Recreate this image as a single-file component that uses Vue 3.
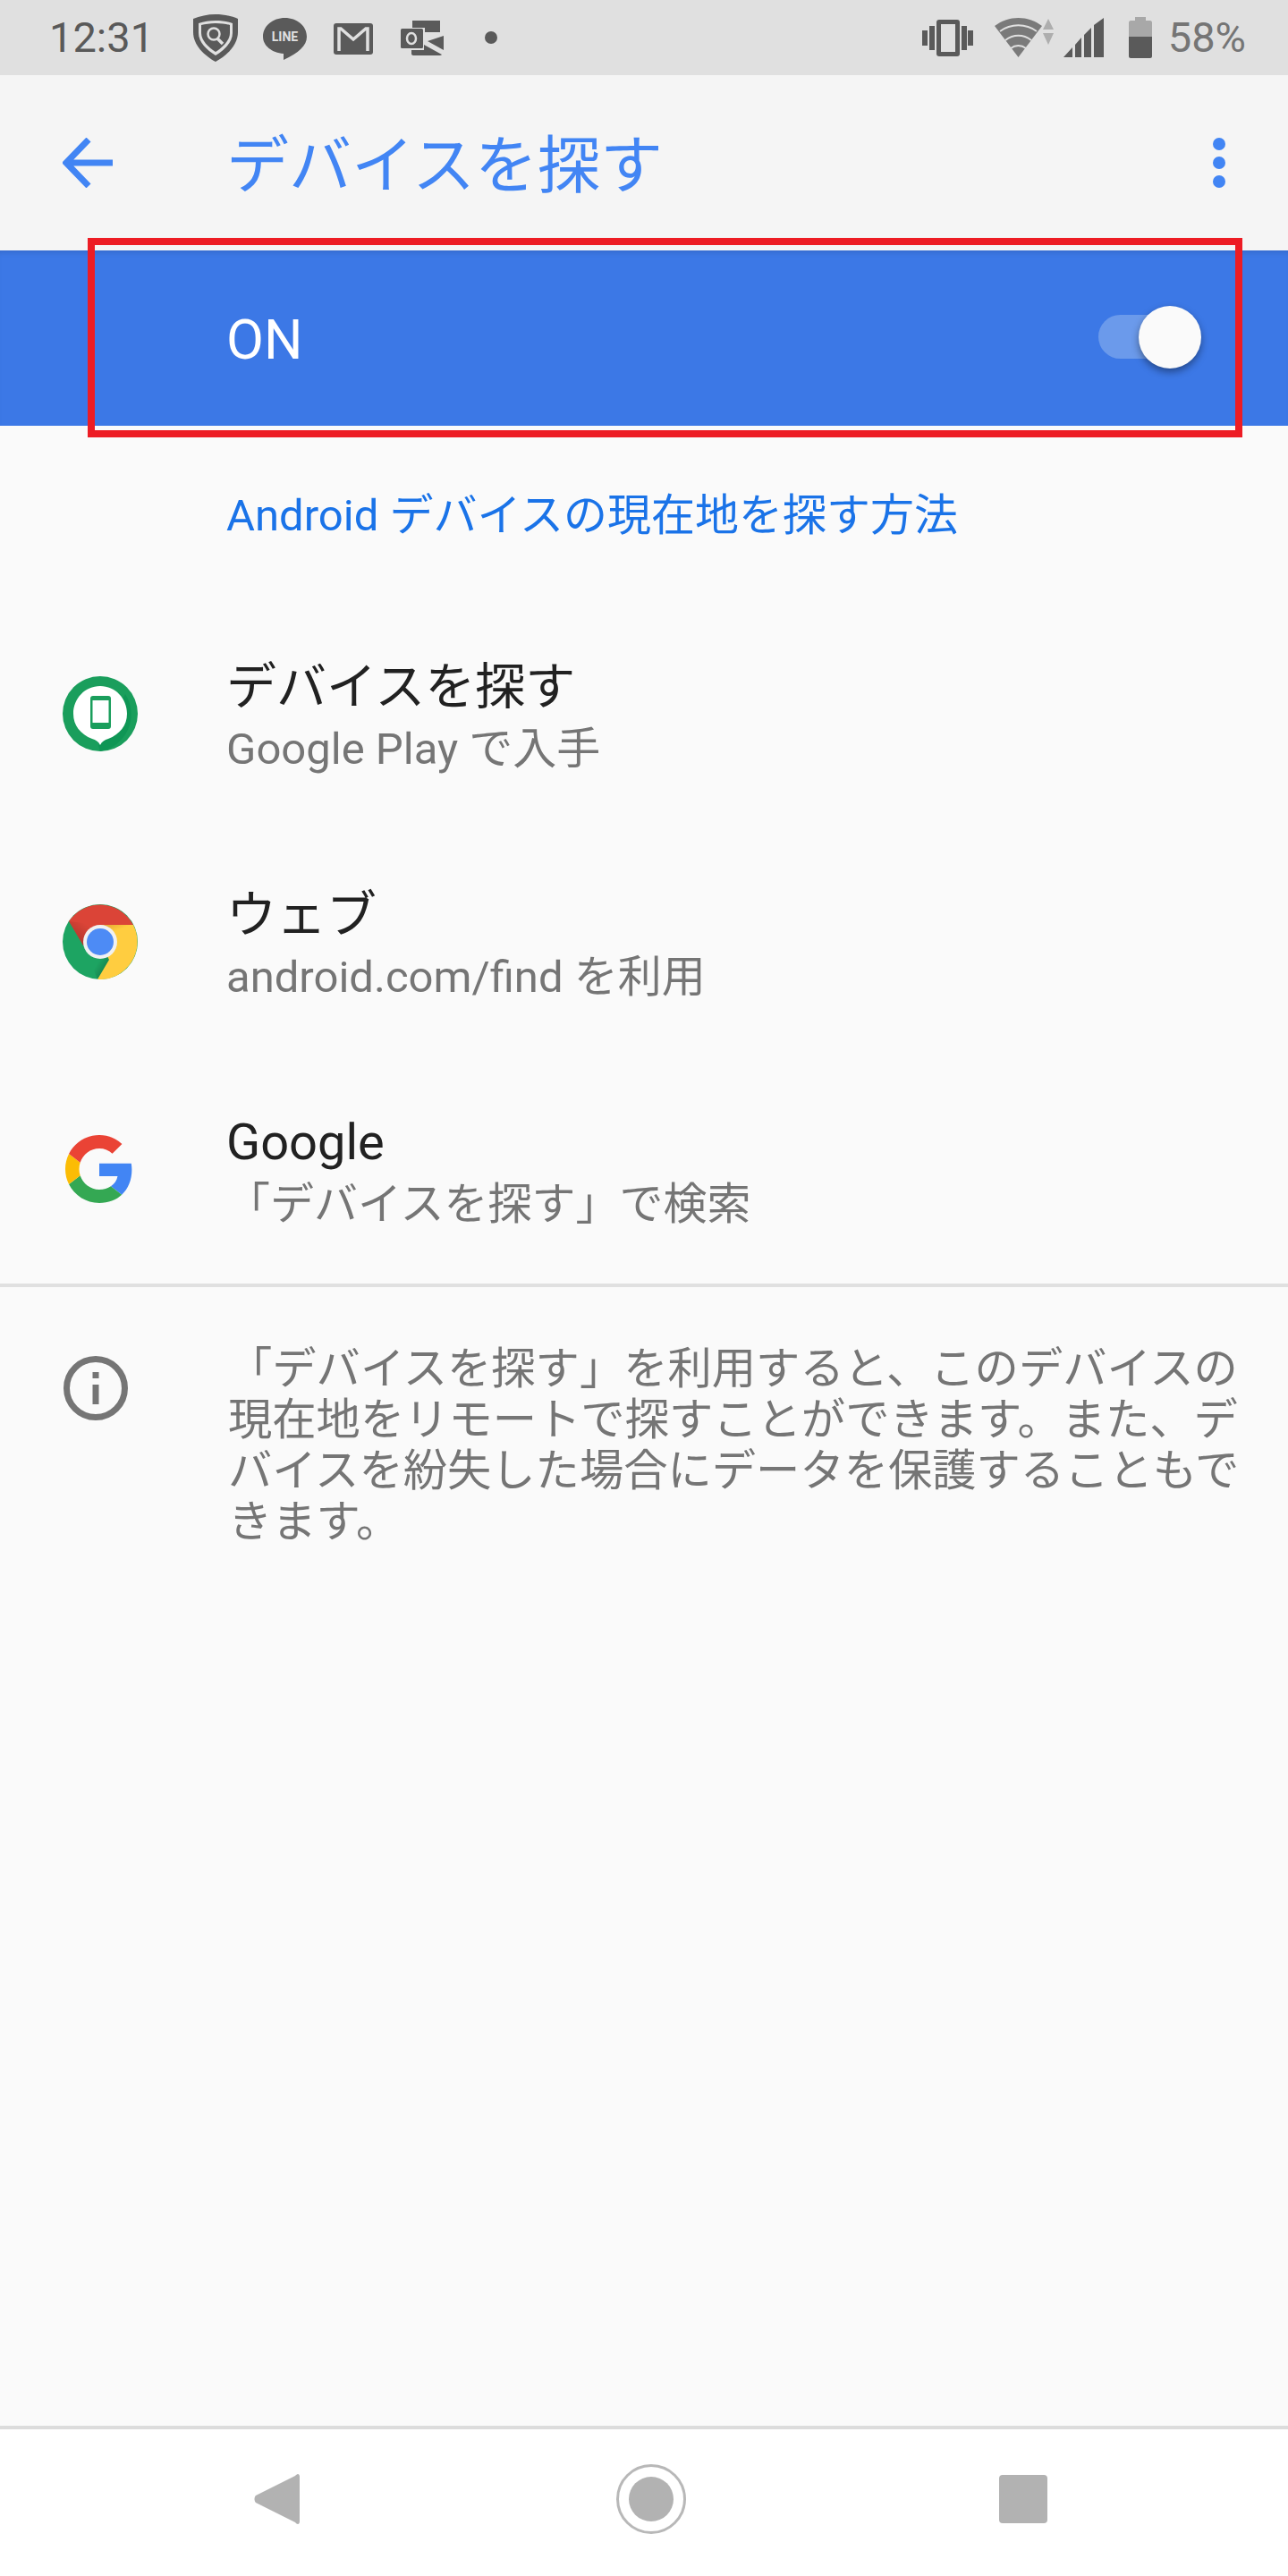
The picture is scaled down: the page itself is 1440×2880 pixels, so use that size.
<script setup>
const rows = [
  { key: 'find', title: 'デバイスを探す', sub: 'Google Play で入手' },
  { key: 'web', title: 'ウェブ', sub: 'android.com/find を利用' },
  { key: 'google', title: 'Google', sub: '「デバイスを探す」で検索' },
]
</script>

<template>
  <div class="page">
    <div class="status">
      <span class="time">12:31</span>
      <svg class="si shield" viewBox="0 0 50 53">
        <path d="M25 0C34 0 43 2 50 5V20C50 34 38 46 25 53C12 46 0 34 0 20V5C7 2 16 0 25 0Z" fill="#5a5a5a"/>
        <path d="M25 7C32 7 38 8 44 10V21C44 31 35 40 25 46C15 40 6 31 6 21V10C12 8 18 7 25 7Z" fill="#e0e0e0"/>
        <path d="M25 10C31 10 37 11 41 12V21C41 29 33 37 25 42C17 37 9 29 9 21V12C13 11 19 10 25 10Z" fill="#5a5a5a"/>
        <circle cx="23" cy="22" r="6.500" fill="none" stroke="#e0e0e0" stroke-width="2.500"/>
        <path d="M27 27L33 33" stroke="#e0e0e0" stroke-width="3.500"/>
      </svg>
      <svg class="si line" viewBox="0 0 49 47">
        <path d="M24.500 0C38 0 49 9 49 21C49 31 40 39 23 47V40C10 39 0 31 0 21C0 9 11 0 24.500 0Z" fill="#5a5a5a"/>
        <text x="24.500" y="26" text-anchor="middle" class="line-text">LINE</text>
      </svg>
      <svg class="si gmail" viewBox="0 0 44 35">
        <rect width="44" height="35" rx="3" fill="#5a5a5a"/>
        <path d="M6 31V6H8L22 18L36 6H38V31" fill="none" stroke="#e0e0e0" stroke-width="3.500"/>
      </svg>
      <svg class="si outlook" viewBox="0 0 49 39">
        <path d="M13 0H44V13H27V8H13Z" fill="#5a5a5a"/>
        <rect y="9" width="25" height="22" rx="1.500" fill="#5a5a5a"/>
        <ellipse cx="12" cy="20" rx="5" ry="6" fill="none" stroke="#e0e0e0" stroke-width="2.500"/>
        <path d="M30 23L48 17V33Z" fill="#5a5a5a"/>
        <path d="M26 27L46 38C46 38 45 39 44 39H14C13 39 12 38 12 37V33H26Z" fill="#5a5a5a"/>
      </svg>
      <span class="dot"></span>
      <span class="spacer"></span>
      <svg class="si vib" viewBox="0 0 57 41">
        <rect x="0" y="12" width="6" height="17" fill="#5a5a5a"/>
        <rect x="8" y="7" width="6" height="27" fill="#5a5a5a"/>
        <rect x="16" y="0" width="26" height="41" rx="3" fill="#5a5a5a"/>
        <rect x="21" y="5" width="16" height="31" fill="#e0e0e0"/>
        <rect x="44" y="7" width="6" height="27" fill="#5a5a5a"/>
        <rect x="51" y="12" width="6" height="17" fill="#5a5a5a"/>
      </svg>
      <svg class="si wifi" viewBox="0 0 67 44">
        <path d="M0 9C16 -3 37 -3 53 9L26.500 44Z" fill="#7a7a7a"/>
        <path d="M6 15C18 6 35 6 47 15M12 25C21 18 32 18 41 25M18 34C23 30 30 30 35 34" fill="none" stroke="#e0e0e0" stroke-width="1.800"/>
        <path d="M60 1L66 13H54ZM60 30L66 17H54Z" fill="#aeaeae"/>
      </svg>
      <svg class="si signal" viewBox="0 0 45 44">
        <path d="M0 44L10 33V44ZM13 30L20 22V44H13ZM23 19L31 11V44H23ZM34 8L45 0V44H34Z" fill="#5a5a5a"/>
      </svg>
      <svg class="si batt" viewBox="0 0 26 46">
        <path d="M7 0H19V4H24C25 4 26 5 26 6V22H0V6C0 5 1 4 2 4H7Z" fill="#a8a8a8"/>
        <path d="M0 22H26V44C26 45 25 46 24 46H2C1 46 0 45 0 44Z" fill="#5a5a5a"/>
      </svg>
      <span class="pct">58%</span>
    </div>

    <header class="appbar">
      <svg class="back" viewBox="0 0 56 56">
        <path d="M56 28H4M29 2L4 28L29 54" fill="none" stroke="#4285f4" stroke-width="7"/>
      </svg>
      <h1 class="title">デバイスを探す</h1>
      <div class="more"><i></i><i></i><i></i></div>
    </header>

    <section class="bar">
      <span class="on">ON</span>
      <div class="switch"><span class="thumb"></span></div>
    </section>

    <a class="link">Android デバイスの現在地を探す方法</a>

    <div v-for="r in rows" :key="r.key" class="row">
      <div class="row-icon">
        <svg v-if="r.key === 'find'" width="84" height="84" viewBox="0 0 84 84">
          <circle cx="42" cy="42" r="42" fill="#1a9e5c"/>
          <path d="M70 20A42 42 0 0 1 42 84L40 78Z" fill="#0f9655"/>
          <path d="M42 11C59 11 72 25 72 42C72 55 64 65 51 70C47 71 44 73 42 77C40 73 37 71 33 70C20 65 12 55 12 42C12 25 25 11 42 11Z" fill="#fff"/>
          <rect x="31" y="22" width="23" height="37" rx="3" fill="#1a9e5c"/>
          <rect x="33.500" y="27" width="18" height="25" fill="#fff"/>
        </svg>
        <svg v-else-if="r.key === 'web'" width="84" height="84" viewBox="0 0 84 84">
          <defs>
            <linearGradient id="rs" x1="23" y1="46" x2="36" y2="30" gradientUnits="userSpaceOnUse">
              <stop offset="0" stop-color="#000" stop-opacity="0.18"/>
              <stop offset="1" stop-color="#000" stop-opacity="0"/>
            </linearGradient>
            <linearGradient id="ys" x1="48" y1="23" x2="52" y2="33" gradientUnits="userSpaceOnUse">
              <stop offset="0" stop-color="#b8651c" stop-opacity="0.35"/>
              <stop offset="1" stop-color="#b8651c" stop-opacity="0"/>
            </linearGradient>
            <linearGradient id="gs" x1="50" y1="70" x2="40" y2="64" gradientUnits="userSpaceOnUse">
              <stop offset="0" stop-color="#000" stop-opacity="0.2"/>
              <stop offset="1" stop-color="#000" stop-opacity="0"/>
            </linearGradient>
          </defs>
          <circle cx="42" cy="42" r="42" fill="#1da462"/>
          <path d="M42 42L52 62L39 84L30 62Z" fill="url(#gs)"/>
          <path d="M7 19A42 42 0 0 1 79 23H42V42L23 46Z" fill="#db4437"/>
          <path d="M7 19L23 46L42 42V23Z" fill="url(#rs)"/>
          <path d="M79 23A42 42 0 0 1 39 84L52 62L42 42V23Z" fill="#ffcd40"/>
          <path d="M42 23H79L75 34H50Z" fill="url(#ys)"/>
          <circle cx="42" cy="42" r="19" fill="#f1f1f1"/>
          <circle cx="42" cy="42" r="15" fill="#4d8bf5"/>
        </svg>
        <svg v-else class="g-logo" width="76" height="78" viewBox="0 0 48 48">
          <path fill="#4285f4" d="M46.980 24.550c0-1.570-.150-3.090-.380-4.550H24v9.020h12.940c-.580 2.960-2.260 5.480-4.780 7.180l7.730 6c4.510-4.180 7.090-10.360 7.090-17.650z"/>
          <path fill="#34a853" d="M24 48c6.480 0 11.930-2.130 15.890-5.810l-7.730-6c-2.150 1.450-4.920 2.300-8.160 2.300-6.260 0-11.570-4.220-13.470-9.910l-7.980 6.190C6.510 42.620 14.620 48 24 48z"/>
          <path fill="#fbbc05" d="M10.530 28.590c-.480-1.450-.760-2.990-.760-4.590s.270-3.140.760-4.590l-7.980-6.190C.920 16.460 0 20.120 0 24c0 3.880.920 7.540 2.560 10.780l7.970-6.190z"/>
          <path fill="#ea4335" d="M24 9.500c3.540 0 6.710 1.220 9.210 3.600l6.850-6.850C35.900 2.380 30.470 0 24 0 14.620 0 6.510 5.380 2.560 13.220l7.980 6.190C12.430 13.720 17.740 9.500 24 9.500z"/>
        </svg>
      </div>
      <div class="row-text">
        <div class="row-title">{{ r.title }}</div>
        <div class="row-sub">{{ r.sub }}</div>
      </div>
    </div>

    <div class="info">
      <svg class="info-icon" viewBox="0 0 72 72">
        <circle cx="36" cy="36" r="32.500" fill="none" stroke="#757575" stroke-width="7"/>
        <rect x="32.500" y="32" width="7" height="22" fill="#757575"/>
        <rect x="32.500" y="18" width="7" height="7" fill="#757575"/>
      </svg>
      <p class="info-text">「デバイスを探す」を利用すると、このデバイスの現在地をリモートで探すことができます。また、デバイスを紛失した場合にデータを保護することもできます。</p>
    </div>

    <nav class="nav">
      <svg class="nb" width="51" height="56" viewBox="0 0 51 56">
        <path d="M49 0C50 0 51 1 51 3V53C51 55 50 56 49 56C48 56 47 55 46 54L2 32C0 30 0 26 2 24L46 2C47 1 48 0 49 0Z" fill="#b2b2b2"/>
      </svg>
      <svg class="nb home" width="78" height="78" viewBox="0 0 78 78">
        <circle cx="39" cy="39" r="37.500" fill="none" stroke="#b8b8b8" stroke-width="3"/>
        <circle cx="39" cy="39" r="25" fill="#b2b2b2"/>
      </svg>
      <span class="sq"></span>
    </nav>

    <div class="redbox"></div>
  </div>
</template>

<style>
html, body { margin: 0; background: #fafafa; }
</style>

<style scoped>
.page {
  position: relative;
  width: 1440px;
  height: 2880px;
  display: flex;
  flex-direction: column;
  background: #fafafa;
  font-family: Roboto, "Noto Sans CJK JP", sans-serif;
  overflow: hidden;
}
.status {
  height: 84px;
  background: #e0e0e0;
  display: flex;
  align-items: center;
  padding: 0 47px 0 55px;
  flex: none;
  box-sizing: border-box;
}
.si { display: block; flex: none; }
.time { font-size: 47px; color: #595959; width: 161px; line-height: 84px; }
.shield { width: 50px; height: 53px; }
.line { width: 49px; height: 47px; margin-left: 28px; margin-top: 3px; }
.line-text { font: 700 14px Roboto, sans-serif; fill: #e0e0e0; }
.gmail { width: 44px; height: 35px; margin-left: 30px; margin-top: 3px; }
.outlook { width: 49px; height: 39px; margin-left: 31px; margin-top: 1px; }
.dot { width: 14px; height: 14px; border-radius: 50%; background: #5a5a5a; margin-left: 45px; }
.spacer { flex: 1; }
.vib { width: 57px; height: 41px; margin-right: 24px; }
.wifi { width: 67px; height: 44px; margin-right: 10px; }
.signal { width: 45px; height: 44px; margin-right: 28px; }
.batt { width: 26px; height: 46px; margin-right: 18px; }
.pct { font-size: 47px; color: #757575; line-height: 84px; }

.appbar {
  height: 196px;
  background: #f5f5f5;
  display: flex;
  align-items: center;
  padding: 0 70px;
  flex: none;
  box-sizing: border-box;
}
.back { width: 56px; height: 56px; flex: none; }
.title {
  margin: 0 0 6px 127px;
  font-size: 70px;
  font-weight: 400;
  color: #4285f4;
  flex: 1;
}
.more { display: flex; flex-direction: column; gap: 7px; }
.more i { width: 14px; height: 14px; border-radius: 50%; background: #4285f4; display: block; }

.bar {
  height: 196px;
  background: #3c78e6;
  display: flex;
  align-items: center;
  justify-content: space-between;
  padding: 0 100px 0 253px;
  flex: none;
  box-sizing: border-box;
  box-shadow: inset 0 6px 6px -4px rgba(0, 0, 0, 0.12);
}
.on { font-size: 61px; color: #fff; margin-top: 3px; }
.switch {
  width: 112px;
  height: 49px;
  margin-top: -3px;
  border-radius: 25px;
  background: #6b9aeb;
  position: relative;
}
.thumb {
  position: absolute;
  right: -3px;
  top: -10px;
  width: 70px;
  height: 70px;
  border-radius: 50%;
  background: #fafafa;
  box-shadow: 0 4px 8px rgba(0, 0, 0, 0.4);
}
.link {
  height: 195px;
  padding: 65px 0 0 253px;
  box-sizing: border-box;
  font-size: 49px;
  line-height: 72px;
  color: #1a73e8;
  flex: none;
}
.row {
  height: 254.500px;
  display: flex;
  align-items: center;
  flex: none;
}
.row-icon {
  width: 224px;
  padding-left: 70px;
  box-sizing: border-box;
  display: flex;
  flex: none;
}
.g-logo { margin-left: 3px; }
.row-text { padding-left: 29px; margin-top: 2px; }
.row-title { font-size: 56px; line-height: 78px; color: #212121; }
.row-sub { font-size: 49px; line-height: 62px; color: #757575; }
.info {
  border-top: 4px solid #e0e0e0;
  display: flex;
  padding: 73px 0 0 71px;
  flex: none;
}
.info-icon { width: 72px; height: 72px; flex: none; margin-top: 4px; }
.info-text {
  margin: -10px 0 0 112px;
  width: 1140px;
  font-size: 49.300px;
  line-height: 57px;
  color: #757575;
}
.nav {
  margin-top: auto;
  height: 168px;
  box-sizing: border-box;
  border-top: 4px solid #dcdcdc;
  background: #fff;
  display: flex;
  align-items: center;
  flex: none;
  padding: 0 0 8px 284px;
}
.home { margin-left: 354px; }
.sq { width: 54px; height: 54px; border-radius: 4px; background: #b2b2b2; flex: none; margin-left: 350px; }
.redbox {
  position: absolute;
  left: 98px;
  top: 266px;
  width: 1291px;
  height: 223px;
  box-sizing: border-box;
  border: 8px solid #ed1c24;
  pointer-events: none;
}
</style>
